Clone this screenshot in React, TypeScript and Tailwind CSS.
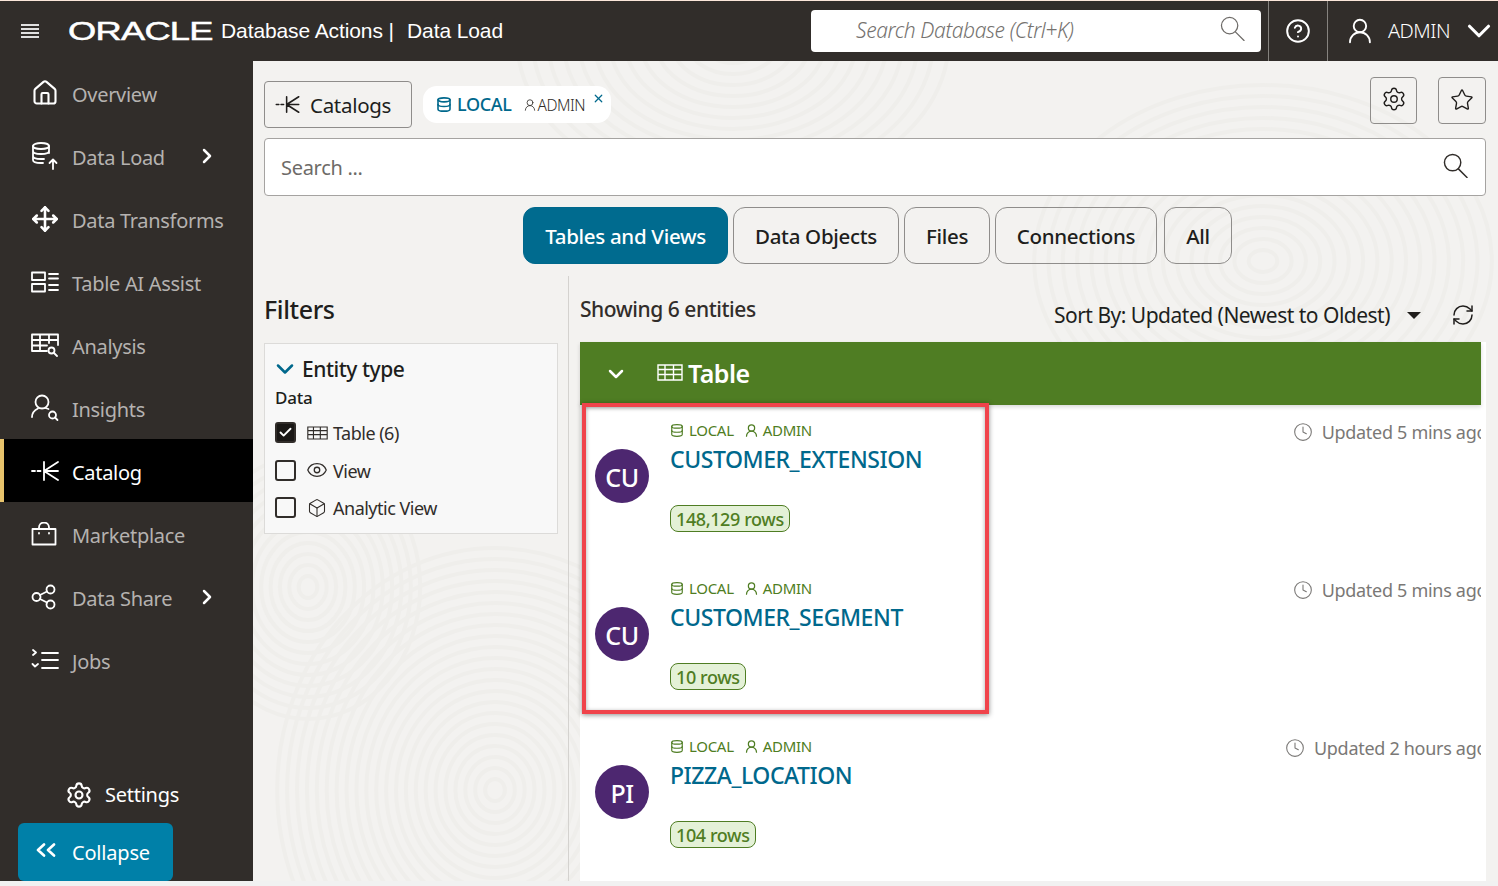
import { ChevronDown, ChevronRight, CircleHelp, Clock, Database, Eye, Box, House, Move, RefreshCw, Settings, Star, UserRound, X, Check } from "lucide-react";
import type { ReactNode } from "react";

const S = { fill: "none", stroke: "currentColor", strokeWidth: 1.8, strokeLinecap: "round" as const, strokeLinejoin: "round" as const };

function CatalogIcon({ cls }: { cls: string }) {
  return (
    <svg viewBox="0 0 28 22" className={cls} {...S}>
      <path d="M1 11h3M6.500 11h3M13 2v18M27 2 13 11h14M13 11l14 9" />
    </svg>
  );
}
function SearchGlyph({ cls, sw }: { cls: string; sw: number }) {
  return (
    <svg viewBox="0 0 26 26" className={cls} fill="none" stroke="currentColor" strokeWidth={sw} strokeLinecap="round">
      <circle cx="10" cy="10" r="8.500" />
      <path d="m16 16.500 9 9" />
    </svg>
  );
}
function DbUpIcon() {
  return (
    <svg viewBox="0 0 28 28" className="w-[28px] h-[28px]" {...S}>
      <ellipse cx="10" cy="4" rx="8" ry="3" />
      <path d="M2 4v14c0 2 3 3 8 3h2M18 4v7M2 9c0 2 3 3 8 3s8-1 8-3M2 14c0 2 3 3 8 3h3M22 27v-9M18.500 21l3.500-3.500 3.500 3.500" />
    </svg>
  );
}
function TableAiIcon() {
  return (
    <svg viewBox="0 0 28 22" className="w-[28px] h-[22px]" {...S}>
      <rect x="1" y="1.500" width="13" height="7.500" />
      <rect x="1" y="13" width="13" height="7.500" />
      <path d="M18 3h9M18 7.500h9M18 14h9M18 19h9" />
    </svg>
  );
}
function AnalysisIcon() {
  return (
    <svg viewBox="0 0 28 24" className="w-[28px] h-[24px]" {...S}>
      <path d="M16 18H1V1.500h26V12M1 7h26M1 12.500h15M9 1.500V18M18 1.500V10" />
      <circle cx="20.500" cy="17.500" r="3" />
      <path d="m23 20 3 3" />
    </svg>
  );
}
function InsightsIcon() {
  return (
    <svg viewBox="0 0 28 28" className="w-[28px] h-[28px]" {...S}>
      <circle cx="11" cy="8" r="6.500" />
      <path d="M1 23c0-4 3-7 6-8.500M14.500 14l3 1" />
      <circle cx="21.500" cy="21" r="3.500" />
      <path d="m24 23.500 2.500 2.500" />
    </svg>
  );
}
function BagIcon() {
  return (
    <svg viewBox="0 0 26 24" className="w-[26px] h-[24px]" {...S}>
      <path d="M1.500 7h23v15.500h-23zM8 7V5.500a5 5 0 0 1 10 0V7M8 11v.5M18 11v.5" />
    </svg>
  );
}
function ShareIcon() {
  return (
    <svg viewBox="0 0 26 26" className="w-[26px] h-[26px]" {...S}>
      <circle cx="5.500" cy="13" r="4" />
      <circle cx="19.500" cy="5.500" r="4" />
      <circle cx="19.500" cy="20.500" r="4" />
      <path d="m9 11 7-3.500M9 15l7 3.500" />
    </svg>
  );
}
function JobsIcon() {
  return (
    <svg viewBox="0 0 28 22" className="w-[28px] h-[22px]" {...S}>
      <path d="m2 1 3 2.500L2 6M1.500 15l2.500 2.500L7 15M11 4h16M11 11h16M11 19h16" />
    </svg>
  );
}
function TableIcon({ cls }: { cls: string }) {
  return (
    <svg viewBox="0 0 26 17" className={cls} fill="none" stroke="currentColor" strokeWidth="1.400">
      <path d="M1 1h24v15H1zM1 5.500h24M1 10.500h24M8 1v15M16.500 1v15" />
    </svg>
  );
}
function Rings({ cx, cy, n, ratio }: { cx: number; cy: number; n: number; ratio: number }) {
  return (
    <g>
      {Array.from({ length: n }, (_, i) => (
        <ellipse key={i} cx={cx} cy={cy} rx={(i + 1) * 11 * ratio} ry={(i + 1) * 11} />
      ))}
    </g>
  );
}

function NavItem({ icon, label, chevron, active }: { icon: ReactNode; label: string; chevron?: boolean; active?: boolean }) {
  return (
    <div className={`h-[63px] flex items-center pl-[31px] ${active ? "bg-black border-l-[4px] border-[#e8c36c] !pl-[27px] text-white" : "text-[#b5b2b0]"}`}>
      <span className="w-[41px] h-[28px] flex items-center text-white shrink-0">{icon}</span>
      <span className={`text-[20px] leading-[28px] tracking-[-0.3px] pt-[5px] ${chevron ? "w-[123px]" : ""}`}>{label}</span>
      {chevron && <ChevronRight className="w-[24px] h-[24px] text-white" strokeWidth={2.500} />}
    </div>
  );
}

function Tab({ label, active, w }: { label: string; active?: boolean; w: string }) {
  return (
    <div className={`${w} h-[57px] pt-[1px] rounded-[12px] flex items-center justify-center text-[20.500px] tracking-[-0.3px] font-medium border ${active ? "bg-[#006b8f] border-[#00688c] text-white" : "border-[#8f8d8b] text-[#201e1c]"}`}>
      {label}
    </div>
  );
}

function FilterRow({ icon, label, checked }: { icon: ReactNode; label: string; checked?: boolean }) {
  return (
    <div className="h-[37.500px] flex items-center">
      <span className={`w-[21px] h-[21px] rounded-[3px] border-2 border-[#312d2a] flex items-center justify-center shrink-0 ${checked ? "bg-[#1a1816]" : ""}`}>
        {checked && <Check className="w-[15px] h-[15px] text-white" strokeWidth={3} />}
      </span>
      <span className="w-[37px] flex justify-center pl-[5px] text-[#312d2a] shrink-0">{icon}</span>
      <span className="text-[18px] tracking-[-0.5px] text-[#312d2a] pt-[2px]">{label}</span>
    </div>
  );
}

function Row({ initials, name, rows, updated, h }: { initials: string; name: string; rows: string; updated: string; h: string }) {
  return (
    <div className={`${h} flex overflow-hidden mr-[5px]`}>
      <div className="w-[90px] pl-[15px] pt-[44px] shrink-0">
        <div className="w-[54px] h-[54px] pt-[3px] rounded-full bg-[#4d2770] text-white flex items-center justify-center text-[25px] tracking-[-0.5px] font-medium">{initials}</div>
      </div>
      <div className="flex-1 pt-[15px]">
        <div className="h-[20px] flex items-center text-[#4f7d23] text-[15px] tracking-[-0.3px]">
          <Database className="w-[14px] h-[15px] mr-[5px]" strokeWidth={2} />
          <span className="mr-[10px]">LOCAL</span>
          <UserRound className="w-[15px] h-[15px] mr-[4px]" strokeWidth={2} />
          <span>ADMIN</span>
        </div>
        <div className="mt-[2px] h-[34px] leading-[34px] text-[#00688c] text-[23px] tracking-[-0.45px] font-medium">{name}</div>
        <div className="mt-[29px] inline-flex h-[27px] pt-[2px] items-center px-[5px] rounded-[8px] border border-[#4f7d23] bg-[#e4f1d7] text-[#4f7d23] text-[18px] tracking-[-0.4px] font-medium">{rows}</div>
      </div>
      <div className="shrink-0 -mr-[6px] pt-[15px] flex items-start text-[#7a7876] whitespace-nowrap">
        <Clock className="w-[20px] h-[20px] mt-[2px] mr-[9px]" strokeWidth={1.300} />
        <span className="text-[18px] leading-[24px] tracking-[-0.3px]">{updated}</span>
      </div>
    </div>
  );
}

export default function App() {
  return (
    <div className="w-[1498px] h-[886px] overflow-hidden bg-[#f1f1f1] font-['Noto_Sans',sans-serif] flex flex-col">
      <div className="h-[1px] bg-[#fbe6da] shrink-0" />
      <header className="h-[60px] shrink-0 bg-[#312d2a] flex items-center text-white">
        <div className="w-[68px] pl-[21px] shrink-0 flex flex-col gap-[2px]">
          <span className="block w-[18px] h-[2px] bg-[#e0e0e0]" />
          <span className="block w-[18px] h-[2px] bg-[#e0e0e0]" />
          <span className="block w-[18px] h-[2px] bg-[#e0e0e0]" />
          <span className="block w-[18px] h-[2px] bg-[#e0e0e0]" />
        </div>
        <div className="w-[153px] shrink-0 font-['Liberation_Sans',sans-serif] text-[25px] leading-[25px]">
          <span className="inline-block origin-left scale-x-[1.45] tracking-[-0.5px] [-webkit-text-stroke:0.5px_white]">ORACLE</span>
        </div>
        <div className="font-['Liberation_Sans',sans-serif] text-[21px] tracking-[-0.1px] w-[186px] shrink-0 whitespace-nowrap">Database Actions |</div>
        <div className="font-['Liberation_Sans',sans-serif] text-[21px] tracking-[-0.1px] whitespace-nowrap">Data Load</div>
        <div className="ml-auto w-[450px] h-[42px] bg-white rounded-[4px] flex items-center pl-[45px] pr-[16px] text-[#75726f]">
          <span className="text-[21px] italic font-light tracking-[-0.4px] flex-1">Search Database (Ctrl+K)</span>
          <SearchGlyph cls="w-[25px] h-[25px] text-[#6e6b68] -mt-[5px]" sw={1.300} />
        </div>
        <div className="ml-[7px] w-[60px] h-[60px] border-x border-[#86837f] flex items-center justify-center shrink-0">
          <CircleHelp className="w-[26px] h-[26px]" strokeWidth={1.800} />
        </div>
        <div className="w-[170px] shrink-0 flex items-center pl-[17px]">
          <UserRound className="w-[30px] h-[30px] mr-[13px]" strokeWidth={1.500} />
          <span className="text-[20px] font-light tracking-[-0.5px]">ADMIN</span>
          <ChevronDown className="w-[38px] h-[38px] ml-[10px] shrink-0" strokeWidth={2} />
        </div>
      </header>
      <div className="h-[820px] flex shrink-0">
        <aside className="w-[253px] shrink-0 bg-[#312d2a] flex flex-col relative">
          <NavItem icon={<House className="w-[28px] h-[28px]" strokeWidth={1.800} />} label="Overview" />
          <NavItem icon={<DbUpIcon />} label="Data Load" chevron />
          <NavItem icon={<Move className="w-[28px] h-[28px]" strokeWidth={2.200} />} label="Data Transforms" />
          <NavItem icon={<TableAiIcon />} label="Table AI Assist" />
          <NavItem icon={<AnalysisIcon />} label="Analysis" />
          <NavItem icon={<InsightsIcon />} label="Insights" />
          <NavItem icon={<CatalogIcon cls="w-[28px] h-[22px]" />} label="Catalog" active />
          <NavItem icon={<BagIcon />} label="Marketplace" />
          <NavItem icon={<ShareIcon />} label="Data Share" chevron />
          <NavItem icon={<JobsIcon />} label="Jobs" />
          <div className="mt-auto flex items-center pl-[65px] text-white h-[40px] mb-[8px]">
            <Settings className="w-[28px] h-[28px] mr-[12px]" strokeWidth={1.800} />
            <span className="text-[20px] tracking-[-0.25px]">Settings</span>
          </div>
          <div className="ml-[18px] w-[155px] h-[58px] rounded-[6px] bg-[#0080a8] flex items-center pl-[18px] text-white">
            <svg viewBox="0 0 20 14" className="w-[20px] h-[14px] mr-[16px] -mt-[4px]" fill="none" stroke="currentColor" strokeWidth="2.600" strokeLinecap="round" strokeLinejoin="round">
              <path d="M8 1.500 2 7l6 5.500M18 1.500 12 7l6 5.500" />
            </svg>
            <span className="text-[20px] tracking-[-0.2px] pt-[2px]">Collapse</span>
          </div>
        </aside>
        <main className="relative flex-1 bg-[#f3f2f0] pt-[16px] overflow-hidden">
          <svg className="absolute inset-0 w-full h-full" fill="none" stroke="#efeeeb" strokeWidth="4">
            <Rings cx={55} cy={526} n={12} ratio={0.85} />
            <Rings cx={242} cy={729} n={22} ratio={0.9} />
            <Rings cx={480} cy={-20} n={14} ratio={1.4} />
            <Rings cx={1010} cy={200} n={16} ratio={1.3} />
          </svg>
          <div className="relative pl-[11px] pr-[12px] flex items-start h-[51px]">
            <div className="mt-[4px] w-[148px] h-[47px] rounded-[4px] border border-[#8f8d8b] flex items-center pl-[10px] text-[#201e1c]">
              <CatalogIcon cls="w-[25px] h-[19px] mr-[10px]" />
              <span className="text-[20.500px] tracking-[-0.3px] pt-[2px]">Catalogs</span>
            </div>
            <div className="ml-[11px] mt-[9px] w-[188px] h-[37px] rounded-[14px] bg-white flex items-center pl-[13px] relative">
              <Database className="w-[16px] h-[19px] text-[#00688c] mr-[5px]" strokeWidth={2.400} />
              <span className="text-[#00688c] text-[18px] tracking-[-0.35px] font-medium mr-[12px]">LOCAL</span>
              <UserRound className="w-[14px] h-[14px] text-[#312d2a]" strokeWidth={1.400} />
              <span className="text-[#312d2a] text-[15.500px] font-light tracking-[-0.5px] pt-[2px]">ADMIN</span>
              <X className="absolute right-[6px] top-[6px] w-[13px] h-[13px] text-[#00688c]" strokeWidth={2.200} />
            </div>
            <div className="ml-auto w-[47px] h-[47px] pb-[3px] rounded-[4px] border border-[#8f8d8b] flex items-center justify-center text-[#201e1c]">
              <Settings className="w-[26px] h-[26px]" strokeWidth={1.300} />
            </div>
            <div className="ml-[21px] w-[48px] h-[47px] pb-[2px] rounded-[4px] border border-[#8f8d8b] flex items-center justify-center text-[#201e1c]">
              <Star className="w-[24px] h-[24px]" strokeWidth={1.400} />
            </div>
          </div>
          <div className="relative ml-[11px] mr-[12px] mt-[10px] h-[58px] rounded-[4px] border border-[#a5a3a1] bg-white flex items-center pl-[16px] pr-[17px]">
            <span className="flex-1 text-[20px] tracking-[-0.3px] text-[#6e6b68] pt-[2px]">Search ...</span>
            <SearchGlyph cls="w-[25px] h-[25px] text-[#312d2a] -mt-[4px]" sw={1.500} />
          </div>
          <div className="relative mt-[11px] pl-[270px] flex gap-[5px]">
            <Tab label="Tables and Views" active w="w-[205px]" />
            <Tab label="Data Objects" w="w-[166px]" />
            <Tab label="Files" w="w-[86px]" />
            <Tab label="Connections" w="w-[162px]" />
            <div className="ml-[2px]"><Tab label="All" w="w-[68px]" /></div>
          </div>
          <div className="relative mt-[12px] h-[605px] flex">
            <div className="w-[316px] shrink-0 pl-[11px] pr-[10px] border-r border-[#d4d2cf]">
              <div className="h-[67px] pt-[15px] text-[25px] leading-[36px] tracking-[-0.4px] font-medium text-[#201e1c]">Filters</div>
              <div className="w-[294px] h-[191px] border border-[#dcdbd9] bg-[#f8f8f8] px-[10px] pt-[10px]">
                <div className="flex items-center h-[32px]">
                  <ChevronDown className="w-[28px] h-[28px] text-[#00688c] -ml-[4px] mr-[3px] -mt-[2px]" strokeWidth={2.200} />
                  <span className="text-[21px] tracking-[-0.45px] font-medium text-[#201e1c]">Entity type</span>
                </div>
                <div className="h-[24px] text-[17px] leading-[24px] tracking-[-0.2px] font-medium text-[#201e1c]">Data</div>
                <div className="mt-[4px]">
                  <FilterRow checked icon={<TableIcon cls="w-[21px] h-[14px]" />} label="Table (6)" />
                  <FilterRow icon={<Eye className="w-[22px] h-[22px]" strokeWidth={1.400} />} label="View" />
                  <FilterRow icon={<Box className="w-[20px] h-[20px]" strokeWidth={1.300} />} label="Analytic View" />
                </div>
              </div>
            </div>
            <div className="flex-1 pl-[11px] pr-[12px] min-w-0">
              <div className="h-[66px] flex items-start text-[#201e1c]">
                <span className="mt-[17px] text-[21px] leading-[32px] tracking-[-0.45px] font-medium text-[#312d2a]">Showing 6 entities</span>
                <span className="ml-auto mt-[23px] text-[21px] leading-[32px] tracking-[-0.5px] whitespace-nowrap">Sort By: Updated (Newest to Oldest)</span>
                <span className="ml-[17px] mt-[36px] w-0 h-0 border-x-[7px] border-x-transparent border-t-[7px] border-t-[#201e1c]" />
                <RefreshCw className="ml-[30px] mt-[27px] w-[24px] h-[24px] mr-[11px]" strokeWidth={1.500} />
              </div>
              <div className="bg-white h-[539px]">
                <div className="h-[63px] mr-[5px] bg-[#4f7d23] flex items-center pl-[24px] text-white shadow-[0_2px_4px_rgba(0,0,0,0.15)]">
                  <ChevronDown className="w-[24px] h-[24px] mr-[29px]" strokeWidth={2.500} />
                  <TableIcon cls="w-[26px] h-[17px] mr-[5px] -mt-[3px]" />
                  <span className="text-[25px] tracking-[-0.5px] font-semibold">Table</span>
                </div>
                <Row h="h-[158px]" initials="CU" name="CUSTOMER_EXTENSION" rows="148,129 rows" updated="Updated 5 mins ago" />
                <Row h="h-[158px]" initials="CU" name="CUSTOMER_SEGMENT" rows="10 rows" updated="Updated 5 mins ago" />
                <Row h="h-[158px]" initials="PI" name="PIZZA_LOCATION" rows="104 rows" updated="Updated 2 hours ago" />
              </div>
            </div>
          </div>
          <div className="absolute left-[329px] top-[342px] w-[407px] h-[311px] border-[4px] border-[#f0434b] shadow-[0_1px_5px_rgba(0,0,0,0.45),inset_0_1px_4px_rgba(0,0,0,0.35)]" />
        </main>
      </div>
    </div>
  );
}
